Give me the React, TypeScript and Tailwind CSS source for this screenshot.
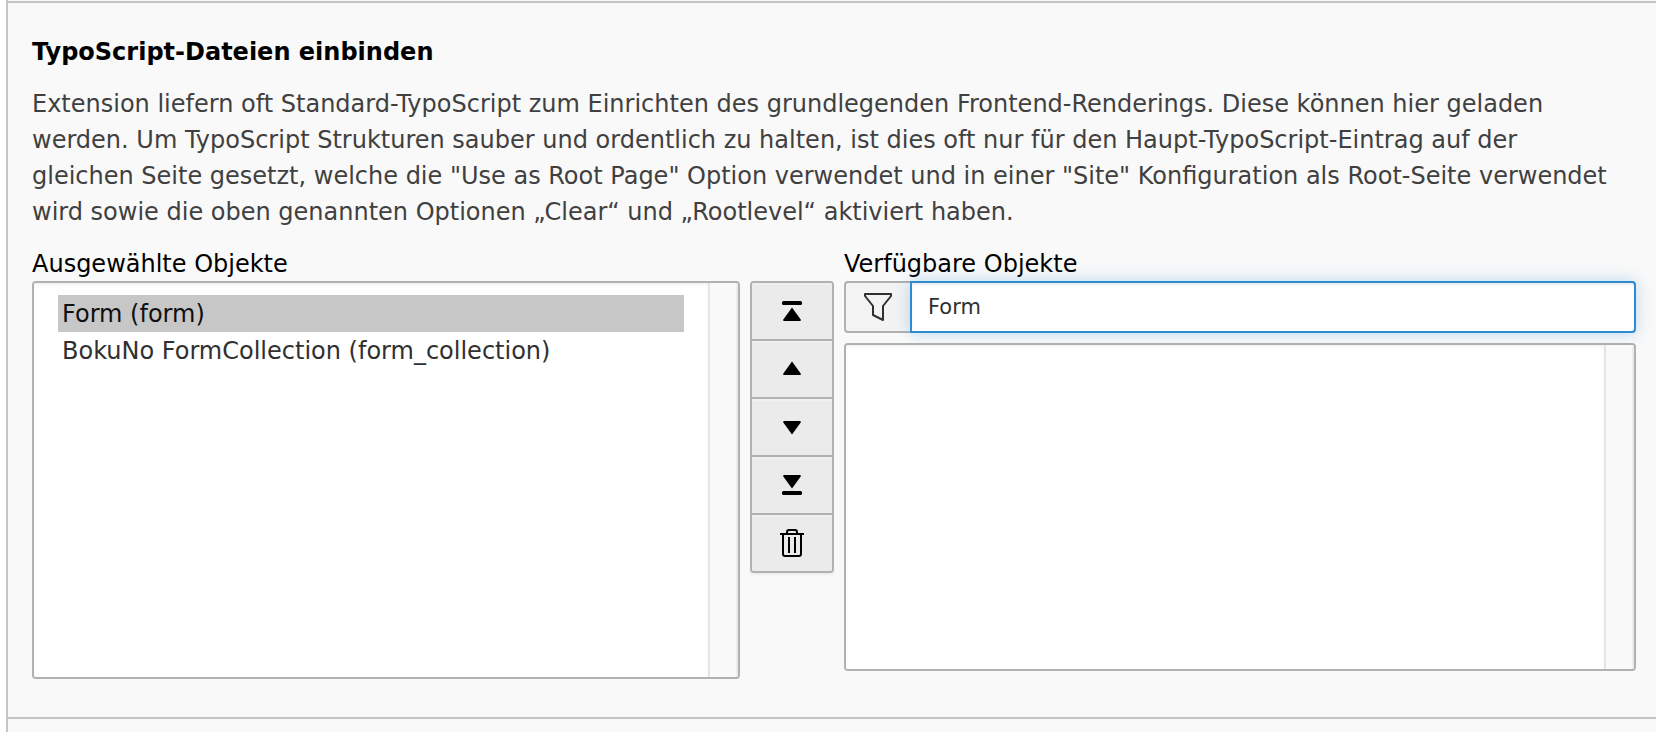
import { useState, type ReactNode } from "react";

const selectedItems = [
  { value: "form", label: "Form (form)" },
  { value: "form_collection", label: "BokuNo FormCollection (form_collection)" },
];

function ScrollTrack() {
  return (
    <div
      aria-hidden="true"
      className="w-[30px] shrink-0 border-r-2 border-l-2 border-r-[#ececec] border-l-[#e4e4e4] bg-[#f9f9f9]"
    />
  );
}

function ListFrame({ height, children }: { height: string; children: ReactNode }) {
  return (
    <div
      className={`flex overflow-hidden rounded-[4px] border-2 border-[#b1b1b1] bg-white ${height}`}
    >
      {children}
      <ScrollTrack />
    </div>
  );
}

function ToolButton({ label, children }: { label: string; children: ReactNode }) {
  return (
    <button
      type="button"
      aria-label={label}
      className="flex h-[58px] w-full items-center justify-center border-b-2 border-[#b1b1b1] bg-[#ebebeb] shadow-[inset_0_2px_0_#f0f0f0] last:h-14 last:border-b-0"
    >
      <svg width="32" height="32" viewBox="0 0 32 32" aria-hidden="true">
        {children}
      </svg>
    </button>
  );
}

export default function App() {
  const [filter, setFilter] = useState("Form");

  return (
    <div className="bg-white pl-1.5 font-['DejaVu_Sans',Verdana,sans-serif] text-2xl text-black">
      <main className="border-l-2 border-[#c5c5c5] bg-[#f9f9f9] pt-px">
        <section className="border-y-2 border-[#c5c5c5] pt-[31px] pr-5 pb-[38px] pl-6">
          <h2 className="leading-9 font-bold">TypoScript-Dateien einbinden</h2>
          <p className="mt-4 pr-5 leading-9 text-[#404040]">
            Extension liefern oft Standard-TypoScript zum Einrichten des grundlegenden
            Frontend-Renderings. Diese können hier geladen werden. Um TypoScript Strukturen sauber
            und ordentlich zu halten, ist dies oft nur für den Haupt-TypoScript-Eintrag auf der
            gleichen Seite gesetzt, welche die "Use as Root Page" Option verwendet und in einer
            "Site" Konfiguration als Root-Seite verwendet wird sowie die oben genannten Optionen
            „Clear“ und „Rootlevel“ aktiviert haben.
          </p>

          <div className="mt-4 flex items-start gap-2.5">
            <div className="min-w-0 flex-[708]">
              <label htmlFor="selected" className="block h-[35px] leading-9">
                Ausgewählte Objekte
              </label>
              <ListFrame height="h-[398px]">
                <select
                  id="selected"
                  multiple
                  defaultValue={["form"]}
                  className="min-w-0 flex-1 appearance-none overflow-hidden bg-white px-6 py-3 text-[#303030] shadow-[inset_0_2px_3px_#0000000d] outline-none"
                >
                  {selectedItems.map((item) => (
                    <option
                      key={item.value}
                      value={item.value}
                      className="h-[37px] min-h-0 px-1 pt-[5px] pb-1 checked:bg-linear-to-r checked:from-[#c7c7c7] checked:to-[#c7c7c7]"
                    >
                      {item.label}
                    </option>
                  ))}
                </select>
              </ListFrame>
            </div>

            <div className="mt-[35px] w-[84px] shrink-0 overflow-hidden rounded-[4px] border-2 border-[#b1b1b1] shadow-[0_2px_2px_#0000000d]">
              <ToolButton label="An den Anfang verschieben">
                <rect x="6" y="6" width="20" height="4" rx="1.5" />
                <path d="M16 12.5 24.7 24.5Q25.2 26 24 26H8Q6.8 26 7.3 24.5Z" />
              </ToolButton>
              <ToolButton label="Nach oben verschieben">
                <path d="M16 8.5 24.7 20.5Q25.2 22 24 22H8Q6.8 22 7.3 20.5Z" />
              </ToolButton>
              <ToolButton label="Nach unten verschieben">
                <path d="M16 23.5 24.7 11.5Q25.2 10 24 10H8Q6.8 10 7.3 11.5Z" />
              </ToolButton>
              <ToolButton label="An das Ende verschieben">
                <path d="M16 19.5 24.7 7.5Q25.2 6 24 6H8Q6.8 6 7.3 7.5Z" />
                <rect x="6" y="22" width="20" height="4" rx="1.5" />
              </ToolButton>
              <ToolButton label="Auswahl löschen">
                <g fill="none" stroke="#000" strokeWidth="2">
                  <path d="M4 7h24M7 7v20q0 2 2 2h14q2 0 2-2V7M11 7V5q0-2 2-2h6q2 0 2 2v2M13 10v16M19 10v16" />
                </g>
              </ToolButton>
            </div>

            <div className="min-w-0 flex-[792]">
              <label htmlFor="available" className="block h-[35px] leading-9">
                Verfügbare Objekte
              </label>
              <div className="flex h-[52px]">
                <label
                  htmlFor="filter"
                  aria-label="Filter"
                  className="flex w-[66px] shrink-0 items-center justify-center rounded-l-[4px] border-2 border-r-0 border-[#b1b1b1] bg-[#f3f3f3]"
                >
                  <svg
                    width="32"
                    height="32"
                    viewBox="0 0 32 32"
                    fill="none"
                    stroke="#303030"
                    strokeWidth="2"
                    strokeLinejoin="round"
                    aria-hidden="true"
                  >
                    <path d="M3 3h26v2l-8 10v14l-10-5v-9L3 5Z" />
                  </svg>
                </label>
                <input
                  id="filter"
                  type="text"
                  value={filter}
                  onChange={(event) => setFilter(event.target.value)}
                  className="min-w-0 flex-1 rounded-r-[4px] border-2 border-[#2c8bd1] bg-white px-4 text-[21px] text-[#303030] shadow-[inset_0_2px_2px_#00000012,0_0_16px_#2c8bd14d] outline-none"
                />
              </div>
              <div className="mt-2.5">
                <ListFrame height="h-[328px]">
                  <select
                    id="available"
                    multiple
                    className="min-w-0 flex-1 appearance-none overflow-hidden bg-white px-6 py-3 shadow-[inset_0_2px_3px_#0000000d] outline-none"
                  />
                </ListFrame>
              </div>
            </div>
          </div>
        </section>
        <div className="h-[13px]" />
      </main>
    </div>
  );
}
